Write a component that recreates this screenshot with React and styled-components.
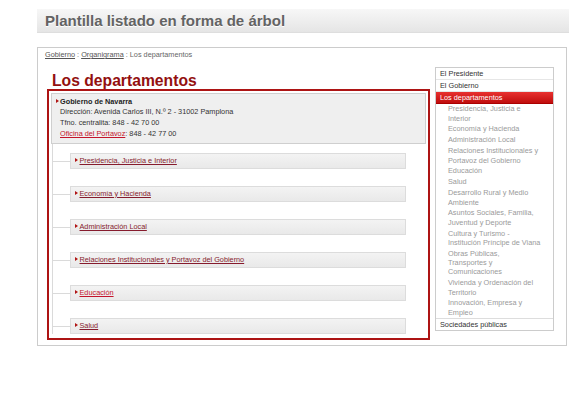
import React from "react";
import styled, { createGlobalStyle } from "styled-components";

const GlobalStyle = createGlobalStyle`
  html, body {
    margin: 0;
    padding: 0;
    background: #fff;
  }
  body {
    font-family: "Liberation Sans", Arial, sans-serif;
    font-size: 7.3px;
    color: #333;
  }
`;

const Page = styled.div`
  width: 569px;
  height: 399px;
  overflow: hidden;
`;

const TitleBar = styled.div`
  margin: 9px 0 0 37px;
  height: 23px;
  padding-left: 8px;
  background: linear-gradient(#f7f7f7, #e5e5e5);
  border-bottom: 1px solid #dedede;
`;

const Title = styled.h1`
  margin: 0;
  font-size: 15px;
  line-height: 24px;
  font-weight: bold;
  color: #636363;
  text-shadow: 0 1px 0 #fff;
`;

const Frame = styled.div`
  margin: 14px 0 0 37px;
  width: 528px;
  border: 1px solid #ccc;
  padding-bottom: 5px;
`;

const Crumbs = styled.div`
  padding: 2px 7px 8px;
  line-height: 9px;
  color: #666;
`;

const CrumbLink = styled.a`
  color: #555;
  text-decoration: underline;
`;

const Columns = styled.div`
  display: flex;
  align-items: flex-start;
  padding: 0 12px 0 9px;
  gap: 5px;
`;

const Main = styled.div`
  width: 383px;
`;

const Heading = styled.h2`
  margin: 5px 0 0 5px;
  font-size: 15.7px;
  line-height: 17px;
  font-weight: bold;
  color: #931010;
`;

const RedBox = styled.div`
  border: 2px solid #ad1414;
  padding: 2px 2px 4px;
`;

const InfoBox = styled.div`
  background: #efefef;
  border: 1px solid #cfcfcf;
  padding: 2.5px 8px 3.5px 8px;
  line-height: 10.7px;
  color: #333;
`;

const Strong = styled.strong`
  color: #222;
`;

const Bullet = styled.span`
  display: inline-block;
  width: 0;
  height: 0;
  border-left: 3px solid #b01515;
  border-top: 2px solid transparent;
  border-bottom: 2px solid transparent;
  margin: 0 1.5px 0 ${(p) => (p.$hang ? "-4.5px" : "0")};
  vertical-align: 0.5px;
`;

const RedLink = styled.a`
  color: ${(p) => p.$color || "#c4142b"};
  text-decoration: underline;
`;

const Tree = styled.div`
  margin-left: 1px;
  padding-top: 9px;
  border-left: 1px solid #dadada;
`;

const Branch = styled.div`
  position: relative;
  margin: 0 20px 17px 17px;
  height: 14px;
  line-height: 14px;
  padding-left: 4px;
  background: linear-gradient(#f3f3f3, #e9e9e9);
  border: 1px solid #dcdcdc;

  &:last-child {
    margin-bottom: 0;
  }

  &::before {
    content: "";
    position: absolute;
    left: -18px;
    top: 7px;
    width: 17px;
    height: 1px;
    background: #dadada;
  }
`;

const Side = styled.div`
  width: 117px;
  border: 1px solid #ccc;
  background: #fff;
`;

const SideRow = styled.div`
  height: 11px;
  line-height: 11px;
  padding: 0 4px;
  border-bottom: 1px solid ${(p) => (p.$active ? "#a00" : "#e6e6e6")};
  color: ${(p) => (p.$active ? "#fff" : "#333")};
  background: ${(p) =>
    p.$active ? "linear-gradient(#e8312f, #c00d0d)" : "transparent"};
`;

const SubItem = styled.div`
  padding: 0.3px 4px 1.3px 12px;
  line-height: 9.3px;
  color: #9a9a9a;
  white-space: nowrap;
`;

const SideFoot = styled.div`
  height: 11px;
  line-height: 11px;
  padding: 0 4px;
  border-top: 1px solid #ddd;
  color: #333;
`;

const departments = [
  { name: "Presidencia, Justicia e Interior", color: "#861b2d" },
  { name: "Economía y Hacienda", color: "#861b2d" },
  { name: "Administración Local", color: "#861b2d" },
  { name: "Relaciones Institucionales y Portavoz del Gobierno", color: "#861b2d" },
  { name: "Educación", color: "#c4142b" },
  { name: "Salud", color: "#861b2d" },
];

const subMenu = [
  ["Presidencia, Justicia e", "Interior"],
  ["Economía y Hacienda"],
  ["Administración Local"],
  ["Relaciones Institucionales y", "Portavoz del Gobierno"],
  ["Educación"],
  ["Salud"],
  ["Desarrollo Rural y Medio", "Ambiente"],
  ["Asuntos Sociales, Familia,", "Juventud y Deporte"],
  ["Cultura y Turismo -", "Institución Príncipe de Viana"],
  ["Obras Públicas,", "Transportes y", "Comunicaciones"],
  ["Vivienda y Ordenación del", "Territorio"],
  ["Innovación, Empresa y", "Empleo"],
];

export default function App() {
  return (
    <Page>
      <GlobalStyle />
      <TitleBar>
        <Title>Plantilla listado en forma de árbol</Title>
      </TitleBar>
      <Frame>
        <Crumbs>
          <CrumbLink>Gobierno</CrumbLink> : <CrumbLink>Organigrama</CrumbLink> : Los
          departamentos
        </Crumbs>
        <Columns>
          <Main>
            <Heading>Los departamentos</Heading>
            <RedBox>
              <InfoBox>
                <div>
                  <Bullet $hang />
                  <Strong>Gobierno de Navarra</Strong>
                </div>
                <div>Dirección: Avenida Carlos III, N.º 2 - 31002 Pamplona</div>
                <div>Tfno. centralita: 848 - 42 70 00</div>
                <div>
                  <RedLink>Oficina del Portavoz</RedLink>: 848 - 42 77 00
                </div>
              </InfoBox>
              <Tree>
                {departments.map((d) => (
                  <Branch key={d.name}>
                    <Bullet />
                    <RedLink $color={d.color}>{d.name}</RedLink>
                  </Branch>
                ))}
              </Tree>
            </RedBox>
          </Main>
          <Side>
            <SideRow>El Presidente</SideRow>
            <SideRow>El Gobierno</SideRow>
            <SideRow $active>Los departamentos</SideRow>
            {subMenu.map((lines) => (
              <SubItem key={lines[0]}>
                {lines.map((l, i) => (
                  <div key={i}>{l}</div>
                ))}
              </SubItem>
            ))}
            <SideFoot>Sociedades públicas</SideFoot>
          </Side>
        </Columns>
      </Frame>
    </Page>
  );
}
